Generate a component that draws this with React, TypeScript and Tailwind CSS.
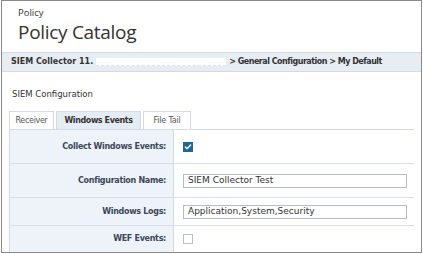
import { Check } from "lucide-react";

const rows = [
  { label: "Collect Windows Events:", kind: "check", on: true, h: "h-[33px]" },
  { label: "Configuration Name:", kind: "text", value: "SIEM Collector Test", h: "h-[34px]" },
  { label: "Windows Logs:", kind: "text", value: "Application,System,Security", h: "h-[28px]" },
  { label: "WEF Events:", kind: "check", on: false, h: "h-[27px]" },
];

export default function App() {
  return (
    <div className="w-[423px] h-[254px] bg-white overflow-hidden">
      <div className="h-[253px] mx-[1px] border border-[#8a8a8a] bg-white flex flex-col">
        <div className="pl-[16px] pt-[6px] h-[52px] font-['Open_Sans',sans-serif] text-[#333]">
          <div className="text-[9.5px] leading-[12px]">Policy</div>
          <div className="text-[19px] leading-[26px] tracking-[-0.3px]">Policy Catalog</div>
        </div>

        <div className="h-[21px] bg-[#e8edf4] border-y border-[#d3dae3] flex items-center pl-[9px] font-['DejaVu_Sans',sans-serif] text-[8px] font-bold text-[#333]">
          <span>SIEM Collector 11.</span>
          <span className="w-[130px] h-[8px] mx-[3px] bg-white border-b border-dashed border-[#dde3ea]" />
          <span className="tracking-[-0.5px]">&gt; General Configuration &gt; My Default</span>
        </div>

        <div className="px-[7px] font-['DejaVu_Sans',sans-serif]">
          <div className="pt-[16px] pl-[3px] text-[8.5px] text-[#333] h-[39px]">SIEM Configuration</div>

          <div className="flex gap-[2px] h-[18px] text-[8px]">
            <div className="w-[45px] flex items-center justify-center border-x border-t border-[#d3dae3] text-[#555] tracking-[-0.3px]">Receiver</div>
            <div className="w-[85px] flex items-center justify-center bg-[#e6ecf3] border-x border-t border-[#d3dae3] font-bold text-[#333] tracking-[-0.4px]">Windows Events</div>
            <div className="w-[48px] flex items-center justify-center border-x border-t border-[#d3dae3] text-[#555] tracking-[-0.2px]">File Tail</div>
          </div>

          <div className="border-l border-t border-[#d3dae3]">
            {rows.map((r, i) => (
              <div key={i} className={`flex ${r.h} ${i > 0 ? "border-t border-[#d8dee6]" : ""}`}>
                <div className="w-[164px] bg-[#eef3f9] border-r border-[#d3dae3] flex items-center justify-end pr-[7px] text-[8px] tracking-[-0.3px] font-bold text-[#3c4759]">
                  {r.label}
                </div>
                <div className="flex-1 flex items-center pl-[9px] pr-[7px]">
                  {r.kind === "check" ? (
                    r.on ? (
                      <span className="w-[10px] h-[10px] bg-[#1f6796] flex items-center justify-center">
                        <Check className="w-[8px] h-[8px] text-white" strokeWidth={4} />
                      </span>
                    ) : (
                      <span className="w-[10px] h-[10px] border border-[#b9c0c8] bg-white" />
                    )
                  ) : (
                    <div className="w-full h-[14px] border border-[#b5bcc4] flex items-center pl-[4px] text-[9px] text-[#333]">
                      {r.value}
                    </div>
                  )}
                </div>
              </div>
            ))}
          </div>
        </div>
      </div>
    </div>
  );
}
